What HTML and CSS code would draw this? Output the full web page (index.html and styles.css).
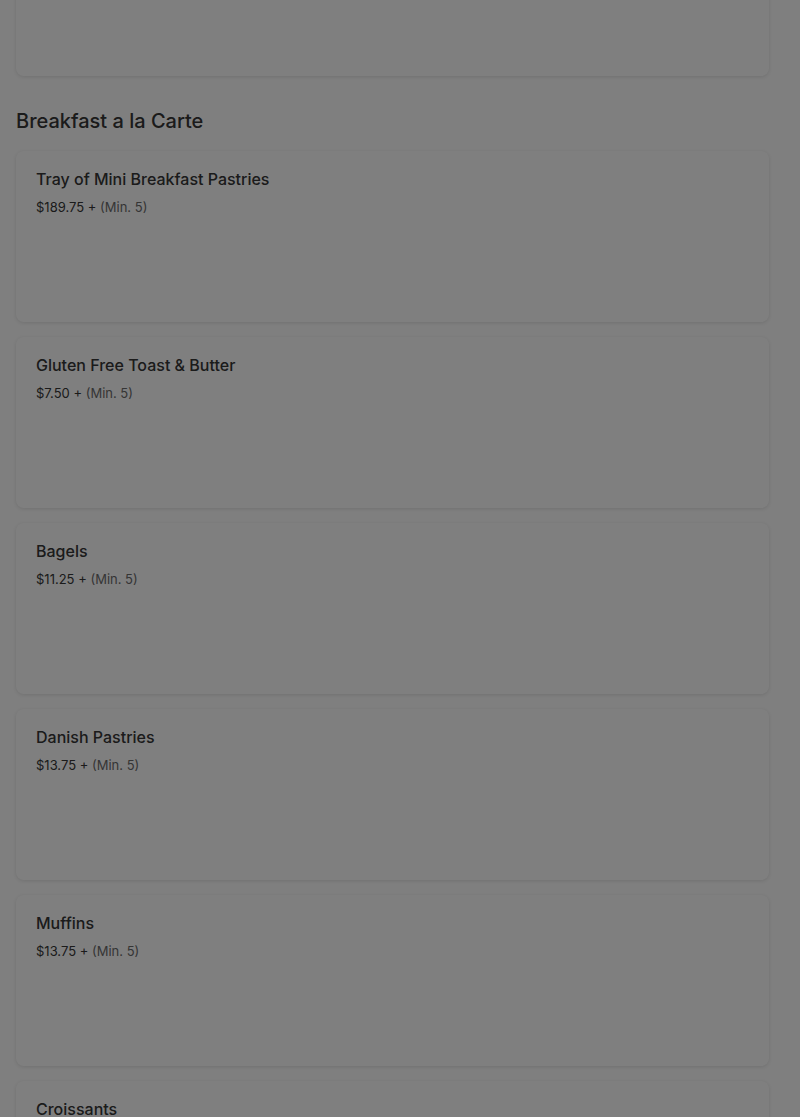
FILE: index.html
```html
<!DOCTYPE html>
<html lang="en">
<head>
<meta charset="utf-8">
<title>Menu</title>
<link rel="stylesheet" href="styles.css">
</head>
<body>
<main class="menu">
  <div class="card card-cut"></div>
  <section class="section">
    <h2 class="section-title">Breakfast a la Carte</h2>
    <div class="card"><h3 class="item-name">Tray of Mini Breakfast Pastries</h3><p class="item-price">$189.75 + <span class="min">(Min. 5)</span></p></div>
    <div class="card"><h3 class="item-name">Gluten Free Toast &amp; Butter</h3><p class="item-price">$7.50 + <span class="min">(Min. 5)</span></p></div>
    <div class="card"><h3 class="item-name">Bagels</h3><p class="item-price">$11.25 + <span class="min">(Min. 5)</span></p></div>
    <div class="card"><h3 class="item-name">Danish Pastries</h3><p class="item-price">$13.75 + <span class="min">(Min. 5)</span></p></div>
    <div class="card"><h3 class="item-name">Muffins</h3><p class="item-price">$13.75 + <span class="min">(Min. 5)</span></p></div>
    <div class="card"><h3 class="item-name">Croissants</h3><p class="item-price">$13.75 + <span class="min">(Min. 5)</span></p></div>
  </section>
</main>
<div class="overlay"></div>
</body>
</html>
```
FILE: styles.css
```css
html, body {
  margin: 0;
  padding: 0;
  background: #ffffff;
  overflow: hidden;
  height: 1117px;
}
body {
  font-family: Inter, "Liberation Sans", sans-serif;
  color: #363636;
}
.menu {
  padding: 0 31px 0 16px;
}
.card {
  background: #ffffff;
  border-radius: 8px;
  box-shadow: 0 1px 4px rgba(0, 0, 0, 0.12);
  height: 171px;
  box-sizing: border-box;
  padding: 17px 20px;
  margin-bottom: 15px;
}
.card-cut {
  margin-top: -95px;
  margin-bottom: 0;
}
.section-title {
  margin: 33px 0 18px;
  font-size: 20px;
  line-height: 24px;
  font-weight: 500;
  color: #363636;
}
.item-name {
  margin: 0;
  font-size: 16px;
  line-height: 22px;
  font-weight: 500;
  color: #363636;
}
.item-price {
  margin: 9px 0 0;
  font-size: 13px;
  line-height: 16px;
  color: #363636;
}
.min {
  color: #6b6b6b;
}
.overlay {
  position: fixed;
  inset: 0;
  background: rgba(0, 0, 0, 0.5);
}
```
